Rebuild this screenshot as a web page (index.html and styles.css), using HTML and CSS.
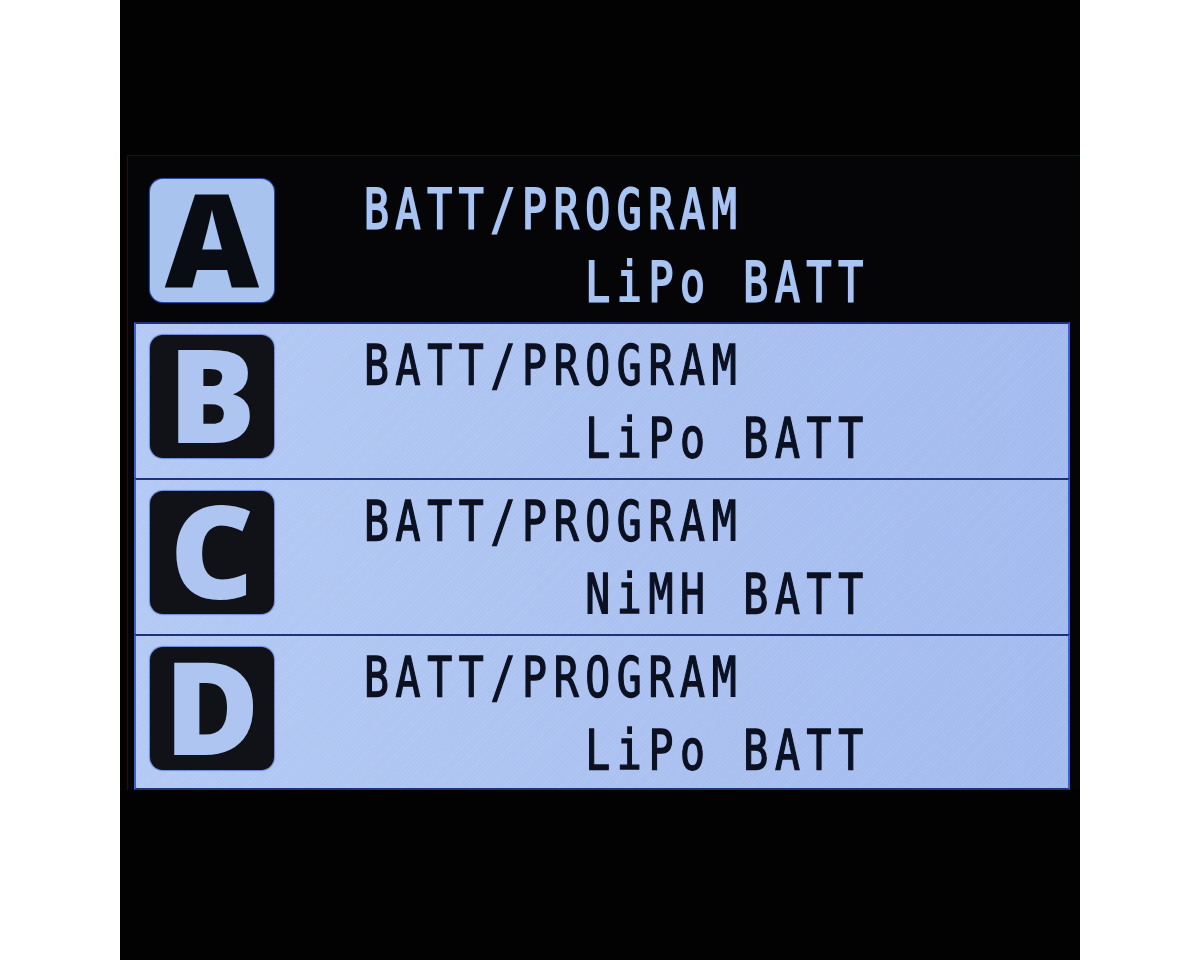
FILE: index.html
```html
<!DOCTYPE html>
<html lang="en">
<head>
  <meta charset="UTF-8" />
  <title>Charger Channels</title>
  <link rel="stylesheet" href="styles.css">
</head>
<body>

  <div class="panel">
    <div class="screen">

      <!-- channel A is the selected one: drawn inverted -->
      <div class="slot slot-active">
        <div class="badge">A</div>
        <div class="info">
          <div class="line">BATT/PROGRAM</div>
          <div class="line">       LiPo BATT</div>
        </div>
      </div>

      <div class="slot">
        <div class="badge">B</div>
        <div class="info">
          <div class="line">BATT/PROGRAM</div>
          <div class="line">       LiPo BATT</div>
        </div>
      </div>

      <div class="slot">
        <div class="badge">C</div>
        <div class="info">
          <div class="line">BATT/PROGRAM</div>
          <div class="line">       NiMH BATT</div>
        </div>
      </div>

      <div class="slot slot-last">
        <div class="badge">D</div>
        <div class="info">
          <div class="line">BATT/PROGRAM</div>
          <div class="line">       LiPo BATT</div>
        </div>
      </div>

    </div>
  </div>

</body>
</html>
```

FILE: styles.css
```css
body {
  margin: 0;
  background-color: #ffffff;
}

.panel {
  width: 960px;
  height: 960px;
  margin: 0 auto;
  background-color: #020203;
  padding-top: 155px;
  box-sizing: border-box;
  overflow: hidden;
}

.screen {
  margin-left: 7px;
  border-top: 1px solid #2c0d0e;
  border-left: 1px solid #2c0d0e;
  padding: 10px 10px 0 6px;
  background-color: #050507;
}

/* one channel row */
.slot {
  display: flex;
  align-items: flex-start;
  height: 156px;
  box-sizing: border-box;
  padding: 11px 0 0 14px;
  border-top: 2px solid #1f3277;
  border-left: 2px solid #3b5fd4;
  border-right: 2px solid #3b5fd4;
  background-color: #aac1f0;
  background-image:
    repeating-linear-gradient(135deg, rgba(255, 255, 255, 0.07) 0 1px, transparent 1px 3px),
    linear-gradient(90deg, #b3c9f4 0%, #a9c0f0 60%, #a2baef 100%);
  color: #0c1122;
}

.slot-last {
  border-bottom: 2px solid #1f3277;
}

.slot-active {
  border-color: transparent;
  background: none;
  color: #a9c4f1;
}

/* letter box */
.badge {
  flex: none;
  width: 124px;
  height: 123px;
  border-radius: 13px;
  background-color: #111217;
  color: #aec5f2;
  font-family: "Open Sans", "DejaVu Sans", sans-serif;
  font-weight: 800;
  font-size: 130px;
  line-height: 116px;
  text-align: center;
  box-shadow: 0 0 1px 1px rgba(40, 70, 190, 0.5);
}

.slot-active .badge {
  background-color: #a9c3ef;
  color: #0a0c14;
  box-shadow: 0 0 1px 1px rgba(60, 100, 230, 0.8);
}

/* two lines of the LCD character grid */
.info {
  margin: -7px 0 0 90px;
  font-family: "DejaVu Sans Mono", "Liberation Mono", monospace;
  font-size: 56px;
  line-height: 73px;
  letter-spacing: 9px;
  transform: scaleX(0.74);
  transform-origin: left top;
  -webkit-text-stroke: 1.4px currentColor;
  text-shadow: 0 0 1px rgba(30, 60, 190, 0.6);
}

.line {
  white-space: pre;
}

.slot-active .info {
  -webkit-text-stroke: 2px currentColor;
  text-shadow: 0 0 2px rgba(70, 120, 255, 0.9);
}
```
